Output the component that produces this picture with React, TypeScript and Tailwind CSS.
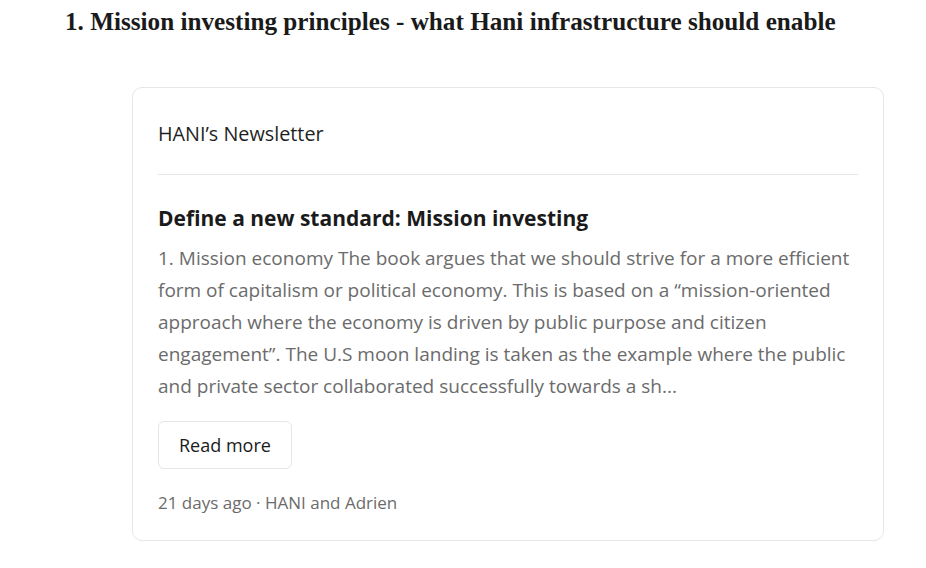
export default function App() {
  return (
    <div className="min-h-[568px] w-[926px] bg-white">
      <div className="pl-[65px] pt-[6px]">
        <h4
          className="text-[25.2px] font-semibold leading-[32px] text-[#1a1a1a]"
          style={{ fontFamily: '"Liberation Serif", serif' }}
        >
          1. Mission investing principles - what Hani infrastructure should enable
        </h4>
      </div>
      <div className="pl-[132px] pt-[49px]">
        <div
          className="w-[752px] rounded-[10px] border border-[#e6e6e6] px-[25px] pb-[23px] pt-[26px]"
          style={{ fontFamily: '"Open Sans", sans-serif' }}
        >
          <div className="border-b border-[#e6e6e6] pb-[20px] text-[19.8px] leading-[40px] text-[#1f1f1f]">
            HANI’s Newsletter
          </div>
          <div className="pt-[26px] text-[21px] font-bold leading-[34px] text-[#1a1a1a]">
            Define a new standard: Mission investing
          </div>
          <p className="mt-[7px] text-[19px] leading-[32px] text-[#6b6b6b]">
            1. Mission economy The book argues that we should strive for a more efficient form of
            capitalism or political economy. This is based on a “mission-oriented approach where the
            economy is driven by public purpose and citizen engagement”. The U.S moon landing is taken
            as the example where the public and private sector collaborated successfully towards a sh...
          </p>
          <button className="mt-[19px] h-[48px] rounded-[6px] border border-[#e6e6e6] px-[20px] text-[18px] text-[#1a1a1a]">
            Read more
          </button>
          <div className="mt-[20px] text-[17px] leading-[28px] text-[#6b6b6b]">
            21 days ago · HANI and Adrien
          </div>
        </div>
      </div>
    </div>
  )
}
